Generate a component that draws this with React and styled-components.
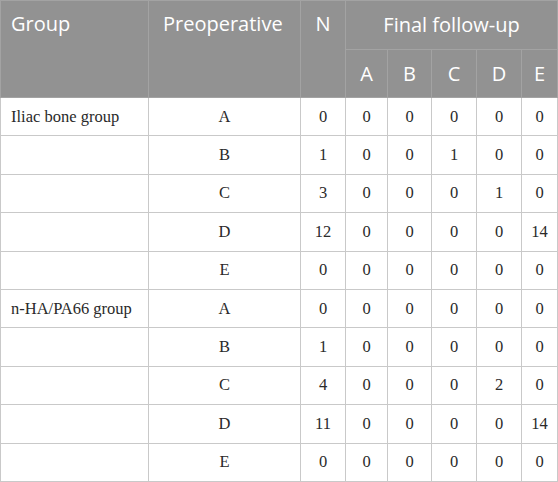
import styled, { createGlobalStyle } from 'styled-components'

const rows = [
  { group: 'Iliac bone group', pre: 'A', n: 0, f: [0, 0, 0, 0, 0] },
  { group: '', pre: 'B', n: 1, f: [0, 0, 1, 0, 0] },
  { group: '', pre: 'C', n: 3, f: [0, 0, 0, 1, 0] },
  { group: '', pre: 'D', n: 12, f: [0, 0, 0, 0, 14] },
  { group: '', pre: 'E', n: 0, f: [0, 0, 0, 0, 0] },
  { group: 'n-HA/PA66 group', pre: 'A', n: 0, f: [0, 0, 0, 0, 0] },
  { group: '', pre: 'B', n: 1, f: [0, 0, 0, 0, 0] },
  { group: '', pre: 'C', n: 4, f: [0, 0, 0, 2, 0] },
  { group: '', pre: 'D', n: 11, f: [0, 0, 0, 0, 14] },
  { group: '', pre: 'E', n: 0, f: [0, 0, 0, 0, 0] },
]

const widths = [148, 152, 45, 42, 44, 45, 45, 36]

export default function App() {
  return (
    <>
      <GlobalStyle />
      <Table>
        <colgroup>
          {widths.map((w, i) => <col key={i} style={{ width: w }} />)}
        </colgroup>
        <thead>
          <HeadRow>
            <Th rowSpan={2} $align="left" $pad={10}>Group</Th>
            <Th rowSpan={2} $align="left" $pad={14}>Preoperative</Th>
            <Th rowSpan={2}>N</Th>
            <Th colSpan={5} $middle>Final follow-up</Th>
          </HeadRow>
          <HeadRow>
            {['A', 'B', 'C', 'D', 'E'].map(l => <Th key={l} $middle>{l}</Th>)}
          </HeadRow>
        </thead>
        <tbody>
          {rows.map((r, i) => (
            <BodyRow key={i}>
              <Td $align="left">{r.group}</Td>
              <Td>{r.pre}</Td>
              <Td>{r.n}</Td>
              {r.f.map((v, j) => <Td key={j}>{v}</Td>)}
            </BodyRow>
          ))}
        </tbody>
      </Table>
    </>
  )
}




////////////////////////////////////////////////////
// Styles
////////////////////////////////////////////////////

const GlobalStyle = createGlobalStyle`
  body {
    margin: 0;
    background: #fff;
  }
`

const Table = styled.table`
  width: 557px;
  border-collapse: collapse;
  table-layout: fixed;
  border: 1px solid #c9c9c9;
`

const HeadRow = styled.tr`
  height: 48.5px;
  background: #929292;
`

const Th = styled.th`
  font-family: "Open Sans", "Noto Sans", sans-serif;
  font-weight: 400;
  font-size: 20px;
  color: #fff;
  text-align: ${p => p.$align || 'center'};
  vertical-align: ${p => (p.$middle ? 'middle' : 'top')};
  padding: ${p => (p.$middle ? '0' : `9px 0 0 ${p.$pad || 0}px`)};
  border: 1px solid #a3a3a3;
  white-space: nowrap;
`

const BodyRow = styled.tr`
  height: 38.4px;
`

const Td = styled.td`
  font-family: "Liberation Serif", "DejaVu Serif", serif;
  font-size: 16.5px;
  color: #2a2a2a;
  text-align: ${p => p.$align || 'center'};
  vertical-align: middle;
  padding: 0 0 0 ${p => (p.$align === 'left' ? '10px' : '0')};
  border: 1px solid #c9c9c9;
  white-space: nowrap;
`
